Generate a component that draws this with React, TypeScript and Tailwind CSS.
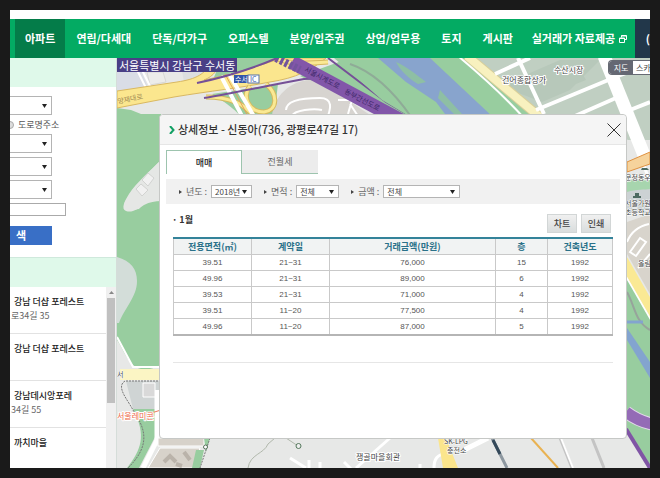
import clsx from 'clsx';
import React, { FC } from 'react';

const menus = ['아파트', '연립/다세대', '단독/다가구', '오피스텔', '분양/입주권', '상업/업무용', '토지', '게시판'];

const filters = [
  { id: 'year', label: '년도', value: '2018년', width: 'w-[41px]' },
  { id: 'area', label: '면적', value: '전체', width: 'w-[43px]' },
  { id: 'price', label: '금액', value: '전체', width: 'w-[77px]' },
];

const columns = ['전용면적(㎡)', '계약일', '거래금액(만원)', '층', '건축년도'];

const rows = [
  ['39.51', '21~31', '76,000', '15', '1992'],
  ['49.96', '21~31', '89,000', '6', '1992'],
  ['39.53', '21~31', '71,000', '4', '1992'],
  ['39.51', '11~20', '77,500', '4', '1992'],
  ['49.96', '11~20', '87,000', '5', '1992'],
];

const places = [
  { name: '강남 더샵 포레스트', address: '로34길 35' },
  { name: '강남 더샵 포레스트', address: '' },
  { name: '강남데시앙포레', address: '34길 55' },
  { name: '까치마을', address: '' },
];

type ISelect = { id: string; label?: string; value?: string; className?: string };
const Select: FC<ISelect> = ({ id, label, value = '', className }) => (
  <div className={clsx('relative flex border border-[#b4b4b4] bg-white', className)}>
    <select id={id} aria-label={label} className="h-full w-full appearance-none pl-[3px] text-[8px] leading-[11px] text-[#444]">
      <option>{value}</option>
    </select>
    <svg className="pointer-events-none absolute top-1/2 right-1 h-1 w-[5px] -translate-y-1/2" viewBox="0 0 5 4">
      <path d="M0 0h5L2.500 4z" fill="#222" />
    </svg>
  </div>
);

const Nav = () => (
  <nav className="mt-[9px] flex h-[39px] shrink-0 bg-[#03ab63] pl-[5px] text-[11px] font-bold whitespace-nowrap text-white">
    {menus.map((menu, i) => (
      <a key={menu} href="#" className={clsx('mr-px flex items-center px-2.5', i === 0 && 'bg-[#047c49]')}>
        {menu}
      </a>
    ))}
    <a href="#" className="flex flex-1 items-center justify-center gap-1">
      실거래가 자료제공
      <svg className="h-2 w-2" viewBox="0 0 8 8" fill="none" stroke="#fff">
        <path d="M2.500 2.500V.5h5v4h-2M.5 3h5v4.500h-5z" />
        <path d="M2 1h5.500M.5 3.500h5" />
      </svg>
    </a>
    <a href="#" className="flex w-[15px] items-center justify-end bg-[#22374a]">
      (
    </a>
  </nav>
);

const Sidebar = () => (
  <aside className="flex w-[107px] shrink-0 flex-col overflow-hidden border-r border-[#d5ddd9] bg-white">
    <div className="h-[29px] shrink-0 bg-[#dff9ea]" />
    <form className="shrink-0 pt-[9px]">
      <Select id="sido" label="시도" className="-ml-px h-[19px] w-[43px]" />
      <label className="flex h-[19px] items-center gap-1 text-[9px] text-[#555]">
        <input type="radio" name="addr" className="-ml-1 h-2 w-2 appearance-none rounded-full border border-[#aaa] bg-[#ddd]" />
        도로명주소
      </label>
      <div className="flex flex-col gap-1">
        <Select id="gugun" label="시군구" className="-ml-px h-[19px] w-[43px]" />
        <Select id="dong" label="읍면동" className="-ml-px h-[19px] w-[43px]" />
        <Select id="danji" label="단지" className="-ml-px h-[19px] w-[43px]" />
      </div>
      <input aria-label="검색어" className="-ml-px mt-1 block h-[13px] w-[57px] border border-[#aaa]" />
      <button type="button" className="mt-2.5 block h-[19px] w-[42px] bg-[#396fc6] pl-1.5 text-left text-[11px] leading-none font-bold text-white">
        색
      </button>
    </form>
    <div className="mt-3 h-[30px] shrink-0 border-t border-[#cfe9dc] bg-[#dff9ea]" />
    <div className="flex min-h-0 flex-1 overflow-hidden">
      <ul className="flex-1">
        {places.map((place, i) => (
          <li key={i} className="h-[47px] border-b border-[#e2e2e2] pt-2 text-[9px] leading-[14px] whitespace-nowrap">
            <div className="pl-1 font-medium text-[#222]">{place.name}</div>
            <div className="pl-px text-[#666]">{place.address}</div>
          </li>
        ))}
      </ul>
      <div className="flex w-2.5 flex-col items-center bg-[#f0f0f0]">
        <svg className="my-1 h-[3px] w-[5px] shrink-0" viewBox="0 0 5 3">
          <path d="M0 3h5L2.500 0z" fill="#888" />
        </svg>
        <div className="h-[105px] w-2 shrink-0 bg-[#c0c0c0]" />
      </div>
    </div>
  </aside>
);

const ramps = 'M250 86c-8 10-2 26 14 26 14-2 14-18 2-28M206 97c26 0 40 8 48 20M276 58c12 6 26 6 52 4';

const Map = () => (
  <svg className="absolute inset-0 h-full w-full" viewBox="117 58 533 410" preserveAspectRatio="xMinYMin slice">
    <rect x="117" y="58" width="533" height="410" fill="#e7e8e7" />

    {/* north west: river bank and the motorway junction */}
    <path d="M117 70h24l8 20-32 6z" fill="#d9dde6" />
    <path d="M147 72h16l3 10-16 3z" fill="#ececea" stroke="#d8d8d6" />
    <path d="M137 70l12 24M142 70l11 22" stroke="#fff" strokeWidth="2" />
    <path d="M180 60h40l-10 18-26 4z" fill="#dcdfe0" />
    <path d="M117 108l14 2 10 4h20v46c-8 8-30 30-36 42-4 10 4 8 14 7 6-8 12-8 22-9v165c-10 4-18 8-28 0-8-8-12-20-16-25z" fill="#98cd9f" />
    <path d="M161 160c-12 12-24 22-32 34-5 8-8 15-3 17 6 2 12-2 18-6 6-3 11-4 17-4z" fill="#e5e7e5" />
    <path d="M142 180l6-7 6 5-6 8zM136 189l5-5 7 6-6 6z" fill="#f1f1f1" stroke="#d2d3d1" />
    <path d="M117 257c14 4 20 12 20 24 0 16-12 26-18 42h-2z" fill="#d3ddd9" />
    <path d="M222 58h70l-46 18-34 6zM212 94l66-10-4 32h-34c-6-8-16-14-28-22zM300 76l50-18h30l30 58h-30z" fill="#98cd9f" />
    <path d="M272 116c2-20 18-35 38-36 16 3 34 18 62 36z" fill="#d7d4d0" />
    <path d="M117 91l60-9c20-3 28-8 34-20l3-4h8c-4 12-8 18-18 22l36-8 42-14h44c-14 12-30 20-56 24-30 6-60 9-96 15l-57 11z" fill="#fbe68e" stroke="#d9b861" />
    <g fill="none">
      <path d={ramps} stroke="#d5b95f" strokeWidth="5" />
      <path d={ramps} stroke="#fae993" strokeWidth="3" />
      <path d="M221 76l22 42M229 74l26 44" stroke="#fff" strokeWidth="4" />
      <path d="M225 74l24 44" stroke="#e3a457" />
      <path d="M197 83c28-6 50-12 80-25M204 98c34-6 62-12 100-19 20-2 30 6 52 18M328 58l58 44 24 14" stroke="#755097" strokeWidth="2" />
      <path d="M286 110c0-8 12-12 34-12 14 0 10 12 8 18M292 116c2-6 22-8 30-6M338 100h14l-4 14M350 104l8 12" stroke="#fff" strokeWidth="2" />
    </g>

    {/* stream running down to the south east */}
    <path d="M334 58h176l50 60H412l-30-18z" fill="#98cd9f" />
    <path d="M378 58h52l64 60h-46l-12-16-30-20z" fill="#88a4cd" />
    <path d="M396 62c10 4 22 14 30 20l-8 2c-10-6-18-14-22-22zM440 90l22 24h-8l-16-16z" fill="#8ebfa4" />
    <path d="M350 64c24 8 44 28 62 54" stroke="#8fab97" strokeWidth="2" fill="none" />
    <path d="M292 62l108 58" stroke="#8256a9" strokeWidth="14" />
    <path d="M276 58l24 12" stroke="#73549d" strokeWidth="8" strokeDasharray="3 2" />

    {/* north east blocks */}
    <path d="M470 58h180v82h-22l-40-22h-48z" fill="#c0cfc2" />
    <path d="M500 86l60-26 40 0-30 30-28 12zM548 78l30-12 8 14-30 12z" fill="#b7c8ba" />
    <path d="M467 56l74 62" stroke="#d8cf9a" strokeWidth="10" fill="none" />
    <path d="M467 56l74 62" stroke="#f8f1bf" strokeWidth="8" fill="none" />
    <path d="M458 56c24 20 46 40 66 62" stroke="#fff" strokeWidth="2" fill="none" />
    <g stroke="#fff" fill="none">
      <path d="M518 58l26 56M495 74l35-16M536 110l82-34M575 116l50-22M625 112l25-10M618 76l32-12" strokeWidth="4" />
      <path d="M604 56l42 104" strokeWidth="13" />
      <path d="M627 120l23 62" strokeWidth="3" />
    </g>

    {/* strip to the right of the panel */}
    <path d="M627 162l23-10v12l-23 8z" fill="#f6d39c" stroke="#df9140" />
    <path d="M627 182c8-6 14 0 23-2v26h-23z" fill="#a7d5ae" />
    <path d="M627 192c10-3 18-2 23-3v24h-23z" fill="#ccd2d4" />
    <path d="M627 222l23-8v80l-23-40z" fill="#d8d4cc" />
    <path d="M627 242c4-10 12-16 22-18M630 252l10-14 6 4-10 14zM638 268l12-14" stroke="#fff" strokeWidth="2" fill="none" />
    <path d="M623 260l32 56" stroke="#fae994" strokeWidth="10" />
    <path d="M622 270l30 52" stroke="#fff" strokeWidth="2" />
    <path d="M627 280l23 40v106l-23-16z" fill="#98cd9f" />
    <path d="M627 292c8 14 8 30 23 38" stroke="#97a49b" strokeWidth="2" fill="none" />
    <path d="M627 328l23 34v16l-23-38z" fill="#83a4cf" />
    <path d="M627 322h16" stroke="#83a4cf" strokeWidth="3" />
    <path d="M625 408l25 10v50l-25-38z" fill="#98cd9f" />
    <path d="M626 412c8 6 16 10 26 12" stroke="#e4d8ec" strokeWidth="13" fill="none" />
    <path d="M626 412c8 6 16 10 26 12" stroke="#946bb6" strokeWidth="11" fill="none" />
    <path d="M626 429l24 39" stroke="#8055a5" strokeWidth="4" />

    {/* south west corner */}
    <path d="M117 337l16 30h28" stroke="#fff" strokeWidth="2" fill="none" />
    <path d="M120 369h41v11h-41z" fill="#fbf5c4" />
    <path d="M126 381h35v28h-28z" fill="#cfd4d4" />
    <path d="M133 409h22v28l-16 31h-12c14-18 20-32 6-59z" fill="#98cd9f" />
    <path d="M157 390v50l-14 28" stroke="#fff" strokeWidth="5" fill="none" />
    <path d="M143 383h12v14h-12z" fill="#d9d9d9" stroke="#fff" />
    <path d="M161 381h-36c-10 6 4 20 9 31 14 20 14 36-6 56" fill="none" stroke="#777" strokeDasharray="2 1" />
    <path d="M135 418l26-8" stroke="#ee795c" />
    <path d="M158 438h46v8h-46zM160 448h40l-6 20h-46z" fill="#d7d2ca" stroke="#fff" />
    <path d="M164 462l6-6 6 6M184 452l6 8M176 464l6 2" stroke="#bab3aa" strokeWidth="4" fill="none" />
    <path d="M196 450h8l-4 18h-8zM204 438h6l-4 14z" fill="#98cd9f" />
    <path d="M210 438l-10 30" fill="none" stroke="#777" strokeDasharray="2 1" />
    <circle cx="205.500" cy="447" r="2" fill="#fff" stroke="#557159" />

    {/* south */}
    <path d="M248 468c2-14 16-14 20-24l7-6M286 438l12 8" stroke="#b1b8ac" fill="none" />
    <circle cx="298.500" cy="446" r="2.500" fill="#eee" stroke="#53775b" />
    <path d="M290 458l16 10M309 460v8M320 462v6M344 462l8 8M356 468l34-30M434 468c0-10 4-12 8-14M420 464v4" stroke="#fff" strokeWidth="3" fill="none" />
    <path d="M438 438h8l12 30h-15z" fill="#fbe58c" />
    <path d="M464 450l24-12" stroke="#fff" strokeWidth="5" />
    <path d="M492 438l15 30" stroke="#8d979f" strokeWidth="3" />
    <path d="M493 440l7 14" stroke="#34495a" strokeWidth="3" />
    <path d="M531 438l27 30" stroke="#e9b252" strokeWidth="2" />
    <path d="M560 438l12 30M592 438l12 30" stroke="#c4c4c4" strokeWidth="3" />
    <path d="M561 438l12 30" stroke="#fff" strokeWidth="2" />

    <rect x="234" y="75" width="14" height="8" fill="#3454a8" />
    <rect x="248" y="75" width="11" height="8" fill="#fff" stroke="#5570a8" />
    <g fontSize="8" fill="#444" stroke="#fff" strokeWidth="2" paintOrder="stroke" strokeLinejoin="round">
      <text x="502" y="83">건어종합상가</text>
      <text x="554" y="73">수산시장</text>
      <text x="356" y="460">쟁골마을회관</text>
      <text x="117" y="419" fill="#ee6a4c">서울레미콘</text>
    </g>
    <g fontSize="7" fill="#444" stroke="#fff" strokeWidth="1" paintOrder="stroke" strokeLinejoin="round">
      <text x="625" y="180">문정동우</text>
      <text x="625" y="206">서울가원</text>
      <text x="625" y="215">초등학교</text>
      <text x="638" y="266">올림</text>
      <text x="444" y="444">SK-LPG</text>
      <text x="447" y="453">충전소</text>
      <text x="117" y="377">서</text>
    </g>
    <g fontSize="7">
      <text x="235" y="82" fill="#fff">수서</text>
      <text x="250" y="82" fill="#3454a8">IC</text>
      <text x="118" y="104" fill="#a38d55" transform="rotate(-12 118 104)">양재대로</text>
      <text x="304" y="71" fill="#3c2768" transform="rotate(28 304 71)">서울시계도로</text>
      <text x="344" y="93" fill="#3c2768" transform="rotate(28 344 93)">동부간선도로</text>
    </g>
    <path d="M642 168h5l2 2h-8zM635 193h4v3h2v2h-8v-2h2z" fill="#4d6a61" />
  </svg>
);

const DealTable = () => (
  <table className="w-full table-fixed border-collapse border-t-2 border-b-2 border-t-[#34839a] border-b-[#b5b5b5] text-center">
    <colgroup>
      <col className="w-[78px]" />
      <col className="w-[78px]" />
      <col />
      <col className="w-[52px]" />
      <col className="w-[65px]" />
    </colgroup>
    <thead>
      <tr className="bg-[#f1f3f3] text-[9px] leading-[15px] text-[#2a7189]">
        {columns.map((col) => (
          <th key={col} className="border border-t-0 border-[#c9c9c9] p-0">
            {col}
          </th>
        ))}
      </tr>
    </thead>
    <tbody>
      {rows.map((row, i) => (
        <tr key={i} className="h-4 font-['Liberation_Sans'] text-[8px] leading-[15px] text-[#555]">
          {row.map((cell, j) => (
            <td key={j} className="border border-[#c9c9c9] p-0">
              {cell}
            </td>
          ))}
        </tr>
      ))}
    </tbody>
  </table>
);

const Detail = () => (
  <section className="absolute inset-x-0 top-14 mr-[23px] ml-[42px] h-[325px] rounded-sm border border-[#c6c8c6] bg-white">
    <header className="flex h-[30px] items-center justify-between rounded-t-sm border-b border-[#e6e6e6] bg-[#f5f5f5] pr-[5px] pl-[9px]">
      <h1 className="flex items-center gap-[3px] text-[11px] font-medium text-[#333]">
        <svg className="h-2 w-[6px]" viewBox="0 0 6 8" fill="none" stroke="#12a064" strokeWidth="2">
          <path d="M1 0l3.500 4L1 8" />
        </svg>
        상세정보 - 신동아(736, 광평로47길 17)
      </h1>
      <button type="button" aria-label="닫기">
        <svg className="h-3.5 w-3.5" viewBox="0 0 14 14" stroke="#333">
          <path d="M.5.5l13 13M13.500.5l-13 13" />
        </svg>
      </button>
    </header>

    <div className="mt-[5px] ml-1.5 flex h-6 text-[9px]">
      <button type="button" className="w-[76px] border border-b-0 border-[#9dc4ae] bg-white font-medium text-[#222]">
        매매
      </button>
      <button type="button" className="w-[76px] border-b border-[#9dc4ae] bg-[#ececec] text-[#666]">
        전월세
      </button>
    </div>

    <div className="mx-1.5 mt-[5px] flex h-[25px] items-center gap-3 bg-[#f1f1f1] pl-[13px] text-[9px] text-[#666]">
      {filters.map((filter) => (
        <div key={filter.id} className="flex items-center gap-1">
          <svg className="h-1 w-[3px]" viewBox="0 0 3 4">
            <path d="M0 0v4l3-2z" fill="#444" />
          </svg>
          <label htmlFor={filter.id}>{filter.label} :</label>
          <Select id={filter.id} value={filter.value} className={clsx('h-[13px]', filter.width)} />
        </div>
      ))}
    </div>

    <div className="mt-1 flex h-[29px] items-start justify-between pr-[15px] pl-3">
      <h2 className="mt-1 text-[9px] leading-4 font-bold text-[#333]">· 1월</h2>
      <div className="mt-1.5 flex gap-1 text-[9px] font-medium text-[#444]">
        <button type="button" className="h-[19px] w-[30px] border border-[#d2d6d6] bg-linear-to-b from-[#f0f0f0] to-[#d9dddd]">
          차트
        </button>
        <button type="button" className="h-[19px] w-[30px] border border-[#d2d6d6] bg-linear-to-b from-[#f0f0f0] to-[#d9dddd]">
          인쇄
        </button>
      </div>
    </div>

    <div className="mx-[13px] border-b border-[#e6e6e6] pb-[26px]">
      <DealTable />
    </div>
  </section>
);

const App = () => {
  return (
    <div className="h-screen bg-[#1a1a1a] p-2.5 font-['Noto_Sans_CJK_KR',sans-serif]">
      <div className="flex h-full flex-col overflow-hidden bg-white">
        <Nav />
        <div className="flex min-h-0 flex-1">
          <Sidebar />
          <main className="relative flex-1 overflow-hidden">
            <Map />
            <div className="absolute top-0 left-0 bg-[#493f86] px-0.5 text-[11px] leading-[14px] text-white">서울특별시 강남구 수서동</div>
            <div className="absolute top-0.5 right-0 flex h-[15px] w-[42px] overflow-hidden rounded-l border border-r-0 border-[#666a73] bg-white text-[8px] whitespace-nowrap">
              <button type="button" className="w-6 shrink-0 bg-[#656873] text-white">
                지도
              </button>
              <button type="button" className="shrink-0 pl-[3px] text-[#444]">
                스카이뷰
              </button>
            </div>
            <Detail />
          </main>
        </div>
      </div>
    </div>
  );
};

export default App;
